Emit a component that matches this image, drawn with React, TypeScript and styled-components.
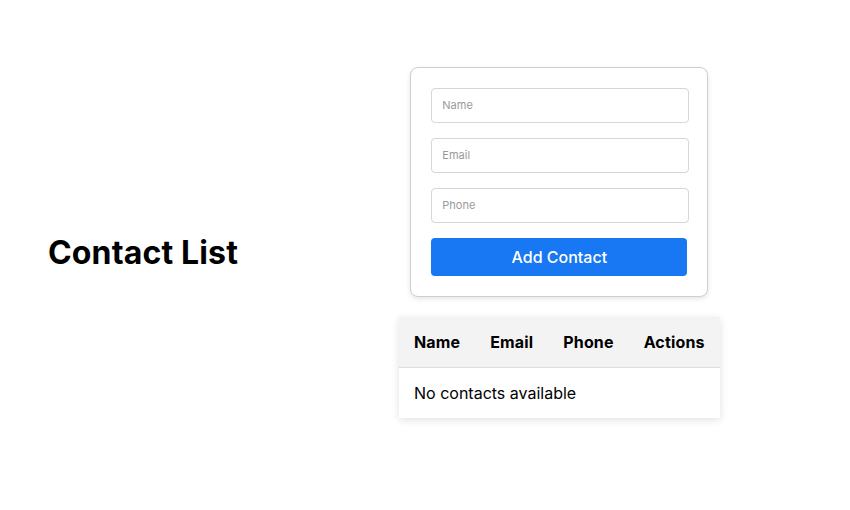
import React from "react";
import styled, { createGlobalStyle } from "styled-components";

const GlobalStyle = createGlobalStyle`
  html, body { margin: 0; padding: 0; background: #fff; }
  body { font-family: Inter, "Noto Sans", sans-serif; color: #000; }
  * { font-family: Inter, "Noto Sans", sans-serif; }
`;

const Page = styled.div`
  display: flex;
  align-items: center;
  padding: 67px 0 0 48px;
`;

const Title = styled.h1`
  margin: 0;
  font-size: 32px;
  font-weight: 700;
  letter-spacing: 0.15px;
  width: 351px;
  flex-shrink: 0;
`;

const Column = styled.div`
  display: flex;
  flex-direction: column;
  align-items: center;
  margin-bottom: 20px;
`;

const Card = styled.form`
  width: 256px;
  padding: 20px;
  border: 1px solid #cfcfcf;
  border-radius: 8px;
  box-shadow: 0 2px 5px rgba(0, 0, 0, 0.1);
  background: #fff;
  margin-bottom: 20.5px;
`;

const Input = styled.input`
  display: block;
  width: calc(100% - 20px);
  padding: 10px;
  margin: 0 0 15.5px;
  border: 1px solid #d6d6d6;
  border-radius: 4px;
  font-size: 11px;
  line-height: 12.5px;
  outline: none;
  &::placeholder { color: #9a9a9a; }
`;

const Button = styled.button`
  display: block;
  width: 100%;
  height: 37.5px;
  border: none;
  border-radius: 4px;
  background: #1877f2;
  color: #fff;
  font-size: 16px;
  font-weight: 500;
  cursor: pointer;
`;

const Table = styled.table`
  border-collapse: collapse;
  box-shadow: 0 2px 8px rgba(0, 0, 0, 0.12);
  background: #fff;
`;

const HeadCell = styled.th`
  background: #f3f3f3;
  padding: 15px;
  font-size: 16px;
  font-weight: 700;
  letter-spacing: 0.15px;
  text-align: left;
  border-bottom: 1px solid #dddddd;
`;

const Cell = styled.td`
  padding: 15px;
  font-size: 16px;
  text-align: left;
`;

export default function App() {
  return (
    <>
      <GlobalStyle />
      <Page>
        <Title>Contact List</Title>
        <Column>
          <Card onSubmit={(e) => e.preventDefault()}>
            <Input placeholder="Name" />
            <Input placeholder="Email" />
            <Input placeholder="Phone" />
            <Button type="submit">Add Contact</Button>
          </Card>
          <Table>
            <thead>
              <tr>
                <HeadCell>Name</HeadCell>
                <HeadCell>Email</HeadCell>
                <HeadCell>Phone</HeadCell>
                <HeadCell>Actions</HeadCell>
              </tr>
            </thead>
            <tbody>
              <tr>
                <Cell colSpan={4}>No contacts available</Cell>
              </tr>
            </tbody>
          </Table>
        </Column>
      </Page>
    </>
  );
}
